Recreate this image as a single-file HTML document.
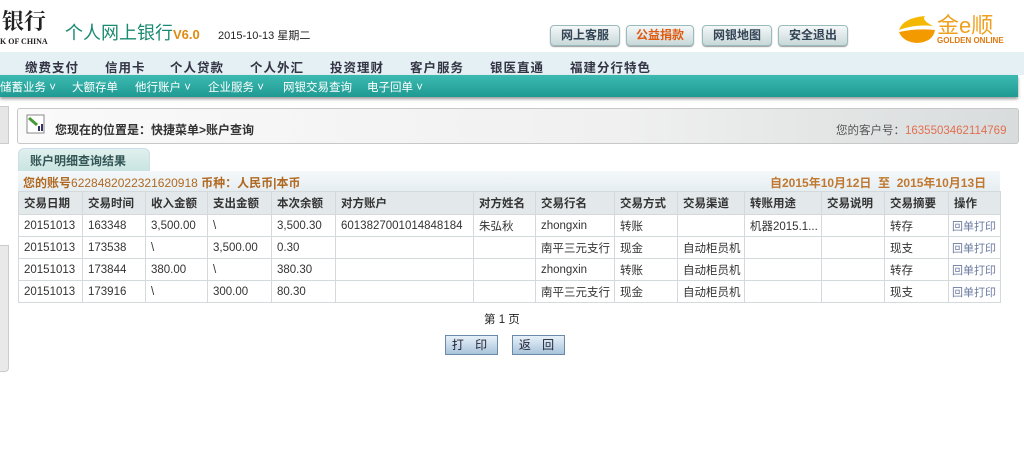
<!DOCTYPE html>
<html><head><meta charset="utf-8"><style>
body{margin:0;width:1024px;height:451px;background:#fff;font-family:"Liberation Sans","Noto Sans CJK SC",sans-serif;font-size:12px;color:#222;position:relative;overflow:hidden}
.a{position:absolute;white-space:nowrap}
.btn{position:absolute;top:25px;height:19px;border:1px solid #9bb;border-radius:4px;background:linear-gradient(#f4f8f8,#c9d8da);font-size:12px;font-weight:bold;color:#345;text-align:center;line-height:19px;box-shadow:0 1px 1px #999}
table{border-collapse:collapse;position:absolute;left:18px;top:191px;width:982px;table-layout:fixed}
td,th{border:1px solid #d4dadc;height:21px;padding:0 0 0 5px;font-size:11.5px;text-align:left;white-space:nowrap;overflow:hidden}
th{background:#e3e8ea;font-weight:bold;height:22px;color:#333}
td{color:#333}
.l{color:#6a7aa0;font-size:11px;padding-left:3px}
.n{font-size:12.5px;font-weight:bold;color:#334;letter-spacing:1px;top:57px}
.pb{position:absolute;top:335px;width:51px;height:18px;border:1px solid #6a8aa8;background:linear-gradient(#e6f0f8,#a9c4dc);text-align:center;line-height:18px;font-size:12px;color:#223;letter-spacing:4px}
</style></head><body>
<div class="a" style="left:2px;top:5px;font-size:22px;font-weight:bold;font-family:'Noto Serif CJK SC',serif">银行</div>
<div class="a" style="left:0;top:37px;font-size:8px;font-weight:bold;font-family:'Liberation Serif',serif">K OF CHINA</div>
<div class="a" style="left:65px;top:19px;font-size:18px;color:#1a8a70">个人网上银行<span style="font-size:13px;color:#e08a10;font-weight:bold">V6.0</span></div>
<div class="a" style="left:218px;top:27px;font-size:11px">2015-10-13 星期二</div>
<div class="btn" style="left:550px;width:68px">网上客服</div>
<div class="btn" style="left:626px;width:66px;color:#e05a10">公益捐款</div>
<div class="btn" style="left:702px;width:68px">网银地图</div>
<div class="btn" style="left:778px;width:68px">安全退出</div>
<svg class="a" style="left:895px;top:10px" width="60" height="36"><path d="M30 6 Q8 8 4 20 Q20 14 38 16 Q26 10 30 6Z" fill="#f5b800"/><path d="M4 22 Q22 18 40 20 Q38 32 22 33 Q8 32 4 22Z" fill="#f39a00"/></svg>
<div class="a" style="left:937px;top:8px;font-size:22px;color:#f0a020">金e顺</div>
<div class="a" style="left:937px;top:36px;font-size:8px;color:#e07a10;font-weight:bold">GOLDEN ONLINE</div>
<div class="a" style="left:0;top:52px;width:1024px;height:23px;background:#e4f0f4"></div>
<div class="a n" style="left:25px">缴费支付</div>
<div class="a n" style="left:105px">信用卡</div>
<div class="a n" style="left:170px">个人贷款</div>
<div class="a n" style="left:250px">个人外汇</div>
<div class="a n" style="left:330px">投资理财</div>
<div class="a n" style="left:410px">客户服务</div>
<div class="a n" style="left:490px">银医直通</div>
<div class="a n" style="left:570px">福建分行特色</div>
<div class="a" style="left:0;top:75px;width:1018px;height:22px;background:linear-gradient(#3cbab2,#1f9a92);box-shadow:0 2px 3px #999"></div>
<div class="a" style="left:0;top:79px;color:#fff;font-size:11.5px">储蓄业务 ˅</div>
<div class="a" style="left:72px;top:79px;color:#fff;font-size:11.5px">大额存单</div>
<div class="a" style="left:135px;top:79px;color:#fff;font-size:11.5px">他行账户 ˅</div>
<div class="a" style="left:208px;top:79px;color:#fff;font-size:11.5px">企业服务 ˅</div>
<div class="a" style="left:283px;top:79px;color:#fff;font-size:11.5px">网银交易查询</div>
<div class="a" style="left:367px;top:79px;color:#fff;font-size:11.5px">电子回单 ˅</div>
<div class="a" style="left:0;top:106px;width:8px;height:36px;background:#e6e6e6;border:1px solid #ccc;border-left:0"></div>
<div class="a" style="left:0;top:245px;width:8px;height:125px;background:#e9e9e9;border:1px solid #ccc;border-left:0;border-radius:0 0 4px 0"></div>
<div class="a" style="left:17px;top:108px;width:1000px;height:34px;border:1px solid #c8c8c8;border-radius:3px;background:linear-gradient(90deg,#fafafa,#f0f0f0 60%,#d8dcdc)"></div>
<svg class="a" style="left:25px;top:113px" width="22" height="22"><rect x="2" y="2" width="17" height="18" fill="#fff" stroke="#888"/><path d="M4 5 L12 12" stroke="#4a9a3a" stroke-width="3"/><rect x="13" y="13" width="2" height="5" fill="#336"/><rect x="16" y="11" width="2" height="7" fill="#336"/></svg>
<div class="a" style="left:55px;top:121px;font-size:12px;font-weight:bold;color:#333">您现在的位置是：快捷菜单&gt;账户查询</div>
<div class="a" style="left:836px;top:122px;font-size:11.5px;color:#555">您的客户号：<span style="color:#e07050">1635503462114769</span></div>
<div class="a" style="left:18px;top:148px;width:130px;height:23px;border-radius:6px 6px 0 0;background:linear-gradient(#e0f0ee,#c8e4e0);border:1px solid #cde"></div>
<div class="a" style="left:30px;top:152px;font-size:12px;font-weight:bold;color:#355">账户明细查询结果</div>
<div class="a" style="left:18px;top:171px;width:982px;height:20px;background:linear-gradient(#f4f8fa,#e6eef2)"></div>
<div class="a" style="left:23px;top:174px;font-size:12px;font-weight:bold;color:#b06820">您的账号<span style="font-weight:normal">6228482022321620918</span> 币种：人民币|本币</div>
<div class="a" style="left:770px;top:174px;font-size:12px;font-weight:bold;color:#c07830">自2015年10月12日&nbsp; 至&nbsp; 2015年10月13日</div>
<table>
<colgroup><col style="width:64px"><col style="width:63px"><col style="width:62px"><col style="width:64px"><col style="width:64px"><col style="width:138px"><col style="width:62px"><col style="width:79px"><col style="width:63px"><col style="width:67px"><col style="width:77px"><col style="width:63px"><col style="width:64px"><col style="width:52px"></colgroup>
<tr><th>交易日期</th><th>交易时间</th><th>收入金额</th><th>支出金额</th><th>本次余额</th><th>对方账户</th><th>对方姓名</th><th>交易行名</th><th>交易方式</th><th>交易渠道</th><th>转账用途</th><th>交易说明</th><th>交易摘要</th><th>操作</th></tr>
<tr><td>20151013</td><td>163348</td><td>3,500.00</td><td>\</td><td>3,500.30</td><td>6013827001014848184</td><td>朱弘秋</td><td>zhongxin</td><td>转账</td><td></td><td>机器2015.1...</td><td></td><td>转存</td><td class="l">回单打印</td></tr>
<tr><td>20151013</td><td>173538</td><td>\</td><td>3,500.00</td><td>0.30</td><td></td><td></td><td>南平三元支行</td><td>现金</td><td>自动柜员机</td><td></td><td></td><td>现支</td><td class="l">回单打印</td></tr>
<tr><td>20151013</td><td>173844</td><td>380.00</td><td>\</td><td>380.30</td><td></td><td></td><td>zhongxin</td><td>转账</td><td>自动柜员机</td><td></td><td></td><td>转存</td><td class="l">回单打印</td></tr>
<tr><td>20151013</td><td>173916</td><td>\</td><td>300.00</td><td>80.30</td><td></td><td></td><td>南平三元支行</td><td>现金</td><td>自动柜员机</td><td></td><td></td><td>现支</td><td class="l">回单打印</td></tr>
</table>
<div class="a" style="left:484px;top:311px;font-size:11.5px">第 1 页</div>
<div class="pb" style="left:445px">打 印</div>
<div class="pb" style="left:512px">返 回</div>
</body></html>
